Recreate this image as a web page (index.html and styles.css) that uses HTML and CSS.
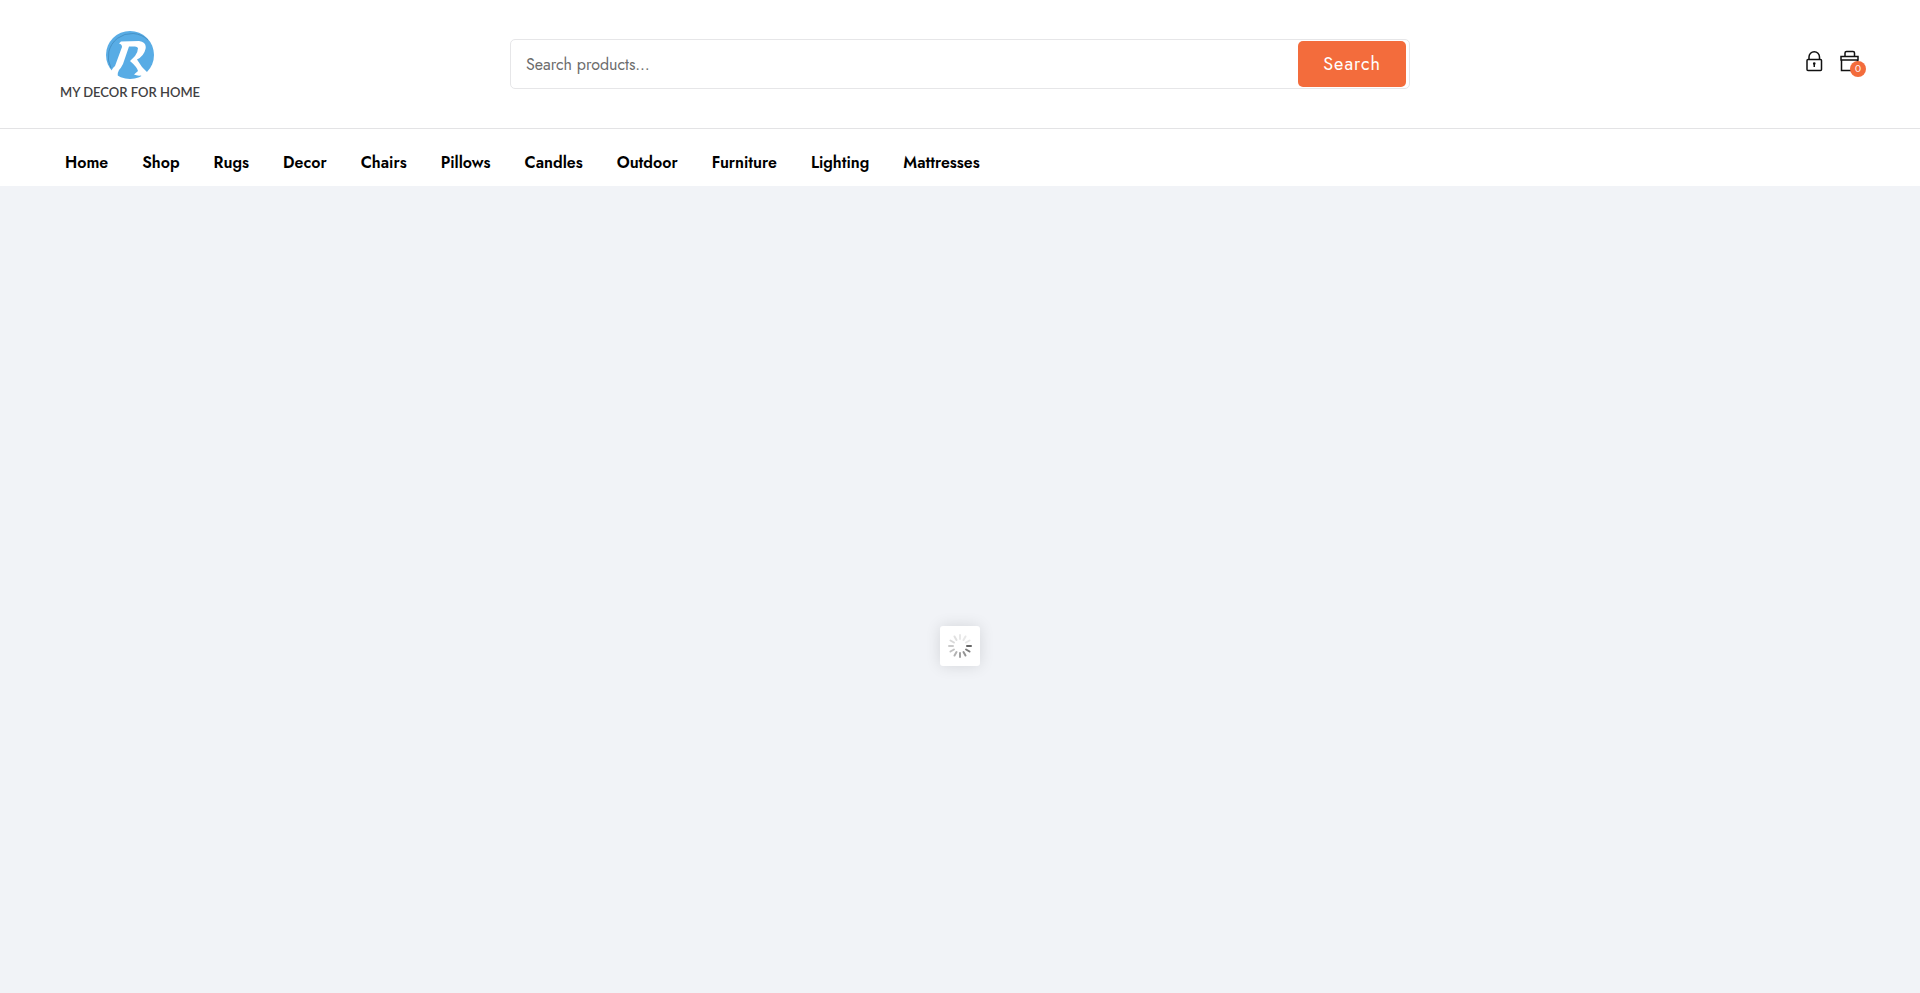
FILE: index.html
```html
<!DOCTYPE html>
<html lang="en">
<head>
<meta charset="utf-8">
<meta name="viewport" content="width=device-width, initial-scale=1">
<title>My Decor For Home</title>
<link rel="stylesheet" href="styles.css">
</head>
<body>
<header class="header">
  <a class="logo" href="#" aria-label="My Decor For Home">
    <svg class="logo-mark" viewBox="0 0 48 48" aria-hidden="true">
      <circle cx="24" cy="24" r="24" fill="#58ace5"/>
      <path d="M5 37A23.500 23.500 0 0 1 42 9" fill="none" stroke="#3f86b8" stroke-width="1" opacity=".7"/>
      <path d="M15 10.500L33 10Q41 11 39.500 18Q38 25 31 28.500L36 36L43 43L38 49L35 44.500Q31 45 28 43.500L32 40Q31 36 24 30L29 25Q32 21 32 17Q31 15.500 29 15.500L23 15.500L17 33Q15 37 13 39Q11 42 12 50L4 42L7 37L9 35L16 16Q16 13 13 12.500Z" fill="#fff"/>
    </svg>
    <span class="logo-text">MY DECOR FOR HOME</span>
  </a>
  <form class="search" role="search">
    <input class="search-input" type="search" placeholder="Search products…" aria-label="Search products">
    <button class="search-button" type="button">Search</button>
  </form>
  <div class="actions">
    <a class="action" href="#" aria-label="Log in">
      <svg class="action-icon" viewBox="0 0 18 22" aria-hidden="true"><rect x="2" y="9.500" width="14.500" height="11" rx="1"/><path d="M4 9V7a5.250 5.250 0 0 1 10.500 0v2"/><path d="M9.250 13v4"/><circle cx="9.250" cy="13.500" r=".6"/></svg>
    </a>
    <a class="action" href="#" aria-label="Cart, 0 items">
      <svg class="action-icon" viewBox="0 0 18 22" aria-hidden="true"><path d="M1 6.500h17v3.500H1zM1.500 9.500v11h16v-11M5 6V3q0-1.500 1.500-1.500h6.500q1.500 0 1.500 1.500v3"/></svg>
      <span class="badge">0</span>
    </a>
  </div>
</header>
<nav class="nav" aria-label="Main">
  <a class="nav-link" href="#">Home</a>
  <a class="nav-link" href="#">Shop</a>
  <a class="nav-link" href="#">Rugs</a>
  <a class="nav-link" href="#">Decor</a>
  <a class="nav-link" href="#">Chairs</a>
  <a class="nav-link" href="#">Pillows</a>
  <a class="nav-link" href="#">Candles</a>
  <a class="nav-link" href="#">Outdoor</a>
  <a class="nav-link" href="#">Furniture</a>
  <a class="nav-link" href="#">Lighting</a>
  <a class="nav-link" href="#">Mattresses</a>
</nav>
<main class="content">
  <div class="loader" role="status" aria-label="Loading">
    <svg class="spinner" viewBox="-12 -12 24 24" aria-hidden="true">
      <path d="M7 0h4" opacity="1"/>
      <path d="M7 0h4" transform="rotate(30)" opacity=".85"/>
      <path d="M7 0h4" transform="rotate(60)" opacity=".7"/>
      <path d="M7 0h4" transform="rotate(90)" opacity=".6"/>
      <path d="M7 0h4" transform="rotate(120)" opacity=".5"/>
      <path d="M7 0h4" transform="rotate(150)" opacity=".4"/>
      <path d="M7 0h4" transform="rotate(180)" opacity=".35"/>
      <path d="M7 0h4" transform="rotate(210)" opacity=".25"/>
      <path d="M7 0h4" transform="rotate(240)" opacity=".2"/>
      <path d="M7 0h4" transform="rotate(270)" opacity=".15"/>
      <path d="M7 0h4" transform="rotate(300)" opacity=".15"/>
      <path d="M7 0h4" transform="rotate(330)" opacity=".15"/>
    </svg>
  </div>
</main>
</body>
</html>
```
FILE: styles.css
```css
* { box-sizing: border-box; }
body {
  margin: 0;
  min-height: 100vh;
  display: flex;
  flex-direction: column;
  background: #f1f3f7;
  color: #000;
  font-family: Jost, Lato, sans-serif;
  font-size: 16px;
}
a { color: inherit; text-decoration: none; }
.header {
  display: grid;
  grid-template-columns: 1fr 2fr 1fr;
  align-items: center;
  padding: 28px 60px;
  background: #fff;
  border-bottom: 1px solid #e3e3e5;
}
.logo {
  justify-self: start;
  display: flex;
  flex-direction: column;
  align-items: center;
  gap: 5px;
  padding-top: 3px;
}
.logo-mark { width: 48px; height: 48px; }
.logo-text {
  color: #414042;
  font: 600 13px/16px Lato, sans-serif;
}
.search {
  display: flex;
  padding: 1px 3px 1px 1px;
  border: 1px solid #e6e6e8;
  border-radius: 5px;
}
.search-input {
  flex: 1;
  min-width: 0;
  padding: 1px 14px 0;
  border: 0;
  background: none;
  font: 16px/24px Jost, Lato, sans-serif;
}
.search-input::placeholder { color: #6c6c6c; opacity: 1; }
.search-button {
  padding: 11px 25px;
  border: 0;
  border-radius: 5px;
  background: #f36c3c;
  color: #fff;
  font: 18px/24px Jost, Lato, sans-serif;
  letter-spacing: 1px;
}
.actions {
  display: flex;
  justify-content: flex-end;
  gap: 17px;
  padding: 0 2px 7px 0;
}
.action { position: relative; }
.action-icon {
  display: block;
  width: 18px;
  height: 22px;
  overflow: visible;
  fill: none;
  stroke: #111;
  stroke-width: 1.5;
}
.badge {
  position: absolute;
  right: -8px;
  bottom: -5px;
  width: 16px;
  border-radius: 50%;
  background: #f36c3c;
  color: #fff;
  font-size: 10px;
  line-height: 16px;
  text-align: center;
}
.nav {
  display: flex;
  flex-wrap: wrap;
  gap: 0 34px;
  padding: 22px 65px 11px;
  background: #fff;
}
.nav-link { font-weight: 600; line-height: 24px; }
.content {
  flex: 1;
  display: flex;
  justify-content: center;
  align-items: flex-start;
  padding: 440px 20px 20px;
}
.loader {
  padding: 8px;
  border-radius: 3px;
  background: #fff;
  box-shadow: 0 0 15px rgba(0, 0, 0, 0.12);
}
.spinner {
  display: block;
  width: 24px;
  height: 24px;
  fill: none;
  stroke: #666;
  stroke-width: 2;
  stroke-linecap: round;
}
```
